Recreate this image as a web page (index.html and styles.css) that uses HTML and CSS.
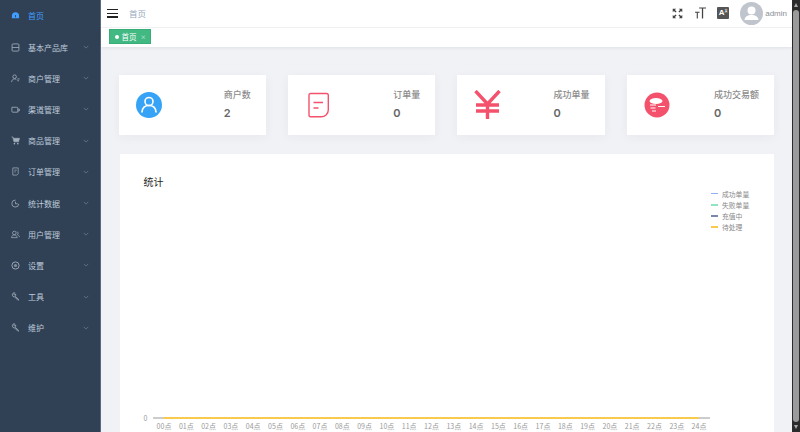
FILE: index.html
```html
<!DOCTYPE html>
<html lang="zh">
<head>
<meta charset="utf-8">
<title>首页</title>
<link rel="stylesheet" href="styles.css">
</head>
<body>
<svg class="defs" width="0" height="0" aria-hidden="true">
  <symbol id="chev" viewBox="0 0 8 5"><path d="M1 1l3 3 3-3" fill="none" stroke="currentColor" stroke-width=".8"/></symbol>
  <symbol id="wrench" viewBox="0 0 10 10"><path d="M1.500 3.500a2.200 2.200 0 0 1 2.600-2.600L3 2.300l.9 1 1.300-1a2.200 2.200 0 0 1-.6 2.400L8.700 8.500 7.800 9.300 4 5.400a2.200 2.200 0 0 1-2.500-1.900z" fill="none" stroke="currentColor" stroke-width=".9"/></symbol>
</svg>
<div class="app">
  <nav class="sidebar">
    <a class="item active"><svg class="ico" viewBox="0 0 10 10"><path d="M1 8V5.500a4 4 0 0 1 8 0V8z" fill="currentColor"/><path d="M5 7V4.500" stroke="#304156" stroke-width="1"/></svg><span class="label">首页</span></a>
    <a class="item"><svg class="ico" viewBox="0 0 10 10"><path d="M2.200 1h5.600a1 1 0 0 1 1 1v6a1 1 0 0 1-1 1H2.200a1 1 0 0 1-1-1V2a1 1 0 0 1 1-1zM1.200 5h7.600" fill="none" stroke="currentColor" stroke-width=".9"/></svg><span class="label">基本产品库</span><svg class="chev"><use href="#chev"/></svg></a>
    <a class="item"><svg class="ico" viewBox="0 0 10 10"><circle cx="4" cy="3" r="2" fill="none" stroke="currentColor" stroke-width=".9"/><path d="M.7 9c.3-2.500 1.500-3.500 3.300-3.500 1 0 1.500.3 2 .7M7 5.500h2.500M7 7.500h2" fill="none" stroke="currentColor" stroke-width=".9"/></svg><span class="label">商户管理</span><svg class="chev"><use href="#chev"/></svg></a>
    <a class="item"><svg class="ico" viewBox="0 0 10 10"><path d="M1 2.500h5.500a1 1 0 0 1 1 1V8H2a1 1 0 0 1-1-1zM7.500 4.500H9.300v2H7.500" fill="none" stroke="currentColor" stroke-width=".9"/></svg><span class="label">渠道管理</span><svg class="chev"><use href="#chev"/></svg></a>
    <a class="item"><svg class="ico" viewBox="0 0 10 10"><path d="M.5 1h1.500l.6 1.500h6.900L8.400 6.500H3.300L2 1.400" fill="currentColor" stroke="currentColor" stroke-width=".6"/><circle cx="3.800" cy="8.500" r=".9" fill="currentColor"/><circle cx="7.600" cy="8.500" r=".9" fill="currentColor"/></svg><span class="label">商品管理</span><svg class="chev"><use href="#chev"/></svg></a>
    <a class="item"><svg class="ico" viewBox="0 0 10 10"><path d="M2 1h6v6.500L6.500 9H2zM3.700 3.500h2.600M3.700 5.500h1.600" fill="none" stroke="currentColor" stroke-width=".8"/></svg><span class="label">订单管理</span><svg class="chev"><use href="#chev"/></svg></a>
    <a class="item"><svg class="ico" viewBox="0 0 10 10"><path d="M8.700 5.500A3.900 3.900 0 1 1 5 1.200M5 3v2.300h2.500" fill="none" stroke="currentColor" stroke-width=".9"/></svg><span class="label">统计数据</span><svg class="chev"><use href="#chev"/></svg></a>
    <a class="item"><svg class="ico" viewBox="0 0 10 10"><circle cx="3.700" cy="3.300" r="2" fill="none" stroke="currentColor" stroke-width=".8"/><path d="M.5 8.500c.3-2 1.500-3 3.200-3s2.900 1 3.200 3zM6.500 1.800a1.800 1.800 0 0 1 .5 3.300c1.300.3 2.200 1.300 2.500 2.800" fill="none" stroke="currentColor" stroke-width=".8"/></svg><span class="label">用户管理</span><svg class="chev"><use href="#chev"/></svg></a>
    <a class="item"><svg class="ico" viewBox="0 0 10 10"><circle cx="5" cy="5" r="4" fill="none" stroke="currentColor" stroke-width="1"/><circle cx="5" cy="5" r="1.800" fill="currentColor" opacity=".7"/></svg><span class="label">设置</span><svg class="chev"><use href="#chev"/></svg></a>
    <a class="item"><svg class="ico"><use href="#wrench"/></svg><span class="label">工具</span><svg class="chev"><use href="#chev"/></svg></a>
    <a class="item"><svg class="ico"><use href="#wrench"/></svg><span class="label">维护</span><svg class="chev"><use href="#chev"/></svg></a>
  </nav>
  <div class="main">
    <header class="topbar">
      <button class="burger"><i></i><i></i><i></i></button>
      <span class="crumb">首页</span>
      <div class="tools">
        <svg class="tool-full" viewBox="0 0 12 12"><path d="M.8 4.500V.8H4.500L3.200 2.100 5 3.900 3.900 5 2.100 3.200zM11.200 4.500V.8H7.500L8.800 2.100 7 3.900 8.100 5 9.900 3.200zM.8 7.500v3.700H4.500L3.200 9.900 5 8.100 3.900 7 2.100 8.800zM11.200 7.500v3.700H7.500L8.800 9.900 7 8.100 8.100 7 9.900 8.800z" fill="#444"/></svg>
        <svg class="tool-size" viewBox="0 0 12 13"><path d="M4.500 .5h7.500v1.200H8.900v10.800H7.500V1.700H4.500zM0 5.200h5v1.100H3.100v6.200H1.900V6.300H0z" fill="#444"/></svg>
        <span class="tool-lang">A<sup>文</sup></span>
        <svg class="avatar" viewBox="0 0 23 23"><circle cx="11.500" cy="11.500" r="11.500" fill="#c0c4cc"/><circle cx="11.500" cy="8.500" r="4" fill="#fff"/><path d="M4.500 18c.3-3.500 3-5 7-5s6.700 1.500 7 5z" fill="#fff"/></svg>
        <span class="user">admin</span>
      </div>
    </header>
    <div class="tagsbar"><span class="tag"><i class="dot"></i>首页<span class="close">×</span></span></div>
    <main class="content">
      <section class="cards">
        <article class="card">
          <svg class="card-ico" viewBox="0 0 26 26"><circle cx="13" cy="13" r="13" fill="#36a3f7"/><circle cx="13" cy="9.500" r="4" fill="none" stroke="#fff" stroke-width="1.600"/><path d="M6 20c.3-4 3-6.500 7-6.500s6.700 2.500 7 6.500" fill="none" stroke="#fff" stroke-width="1.600" stroke-linecap="round"/></svg>
          <div class="stat"><span class="stat-name">商户数</span><span class="stat-val">2</span></div>
        </article>
        <article class="card">
          <svg class="card-ico" viewBox="0 0 26 26"><path d="M5.500 1.500h16a1.800 1.800 0 0 1 1.800 1.800V18c0 4-3.500 6.800-7 6.800H5.500A1.500 1.500 0 0 1 4 23.300V3A1.500 1.500 0 0 1 5.500 1.500z" fill="none" stroke="#f4516c" stroke-width="1.400"/><path d="M8.500 10.500h9.500M8.500 16h5" stroke="#f4516c" stroke-width="1.400"/></svg>
          <div class="stat"><span class="stat-name">订单量</span><span class="stat-val">0</span></div>
        </article>
        <article class="card">
          <svg class="card-ico card-ico-yen" viewBox="0 0 27 30"><path d="M1.500 1L13.500 14 25.500 1M13.500 14v15M2 15h23M2 21h23" fill="none" stroke="#f4516c" stroke-width="3.400"/></svg>
          <div class="stat"><span class="stat-name">成功单量</span><span class="stat-val">0</span></div>
        </article>
        <article class="card">
          <svg class="card-ico" viewBox="0 0 26 26"><circle cx="13" cy="13" r="12.500" fill="#f4516c"/><ellipse cx="12" cy="9" rx="6.500" ry="3" fill="#fff"/><path d="M6 13h6M6.500 16h5M8 19h4M14 14.500h7" stroke="#fff" stroke-width="1.200"/></svg>
          <div class="stat"><span class="stat-name">成功交易额</span><span class="stat-val">0</span></div>
        </article>
      </section>
      <section class="panel">
        <h2 class="panel-title">统计</h2>
        <ul class="legend">
          <li class="legend-item"><i class="swatch s1"></i>成功单量</li>
          <li class="legend-item"><i class="swatch s2"></i>失败单量</li>
          <li class="legend-item"><i class="swatch s3"></i>充值中</li>
          <li class="legend-item"><i class="swatch s4"></i>待处理</li>
        </ul>
        <svg class="chart" viewBox="0 0 654 40" width="654" height="40">
          <text x="25.500" y="12.500" text-anchor="middle">0</text>
          <line x1="33" x2="590" y1="10" y2="10" stroke="#ccc" stroke-width="2"/>
          <line x1="43.500" x2="579" y1="10" y2="10" stroke="#f8cb4d" stroke-width="2"/>
          <g text-anchor="middle">
            <text x="44" y="21">00点</text><text x="66.300" y="21">01点</text><text x="88.600" y="21">02点</text><text x="110.900" y="21">03点</text><text x="133.200" y="21">04点</text><text x="155.500" y="21">05点</text><text x="177.800" y="21">06点</text><text x="200" y="21">07点</text><text x="222.300" y="21">08点</text><text x="244.600" y="21">09点</text><text x="266.900" y="21">10点</text><text x="289.200" y="21">11点</text><text x="311.500" y="21">12点</text><text x="333.800" y="21">13点</text><text x="356.100" y="21">14点</text><text x="378.400" y="21">15点</text><text x="400.700" y="21">16点</text><text x="423" y="21">17点</text><text x="445.300" y="21">18点</text><text x="467.600" y="21">19点</text><text x="489.900" y="21">20点</text><text x="512.200" y="21">21点</text><text x="534.500" y="21">22点</text><text x="556.800" y="21">23点</text><text x="579" y="21">24点</text>
          </g>
        </svg>
      </section>
    </main>
  </div>
  <div class="scrollbar"><span class="arrow-up"></span><span class="thumb"></span><span class="arrow-down"></span></div>
</div>
</body>
</html>
```
FILE: styles.css
```css
* { box-sizing: border-box; margin: 0; padding: 0; }
html, body { width: 800px; height: 432px; overflow: hidden; }
body { font-family: "Noto Sans CJK SC", "Liberation Sans", sans-serif; background: #fff; }
.defs { position: absolute; }
.app { display: flex; width: 800px; height: 432px; }

.sidebar { width: 101px; flex: none; background: #304156; border-right: 1px solid #5b6a80; padding-top: 0.300px; }
.item { display: flex; align-items: center; height: 31.2px; color: #bfcbd9; font-size: 8px; padding: 0 11.500px 0 11px; }
.item.active { color: #409eff; }
.ico { width: 9px; height: 9px; flex: none; margin-right: 8px; color: #a5b0be; }
.item.active .ico { color: #409eff; }
.label { flex: 1; }
.chev { width: 6px; height: 4px; color: #7e8b9c; flex: none; }

.main { flex: 1; min-width: 0; display: flex; flex-direction: column; }
.topbar { height: 27.500px; flex: none; display: flex; align-items: center; padding-left: 6px; border-bottom: 1px solid #f2f3f5; }
.burger { width: 11px; height: 9px; border: 0; background: none; display: flex; flex-direction: column; justify-content: space-between; margin-right: 11px; }
.burger i { display: block; height: 1.500px; background: #222; }
.crumb { font-size: 8.500px; color: #97a8be; }
.tools { margin-left: auto; display: flex; align-items: center; padding-right: 5px; }
.tool-full { width: 11px; height: 11px; margin-right: 12px; }
.tool-size { width: 11px; height: 12px; margin-right: 11px; }
.tool-lang { width: 12px; height: 12px; background: #555; color: #fff; font: bold 8px/12px "Liberation Sans", "Noto Sans CJK SC", sans-serif; margin-right: 11px; text-align: center; border-radius: 1px; white-space: nowrap; overflow: hidden; }
.tool-lang sup { font-size: 3px; vertical-align: 3px; line-height: 0; }
.avatar { width: 23px; height: 23px; margin-right: 2px; }
.user { font: 8px "Liberation Sans", sans-serif; color: #8a8f96; }

.tagsbar { height: 19px; flex: none; display: flex; align-items: center; padding-left: 8px; background: #fff; box-shadow: 0 1px 3px rgba(0,21,41,.08); position: relative; }
.tag { display: flex; align-items: center; height: 15px; width: 42px; margin-top: -0.500px; padding-left: 5px; background: #42b983; border: 1px solid #38ad78; color: #fff; font-size: 7.500px; }
.dot { width: 4px; height: 4px; border-radius: 50%; background: #fff; margin-right: 2.500px; flex: none; }
.close { font-size: 5.500px; margin-left: 4px; opacity: .8; }

.content { flex: 1; min-height: 0; background: #f0f2f6; padding: 28.500px 18px 0 17.500px; overflow: hidden; }
.cards { display: flex; gap: 22px; }
.card { flex: 1; height: 60px; background: #fff; display: flex; align-items: center; justify-content: space-between; padding: 0 15px 0 17px; box-shadow: 0 2px 10px rgba(50,65,86,.05); }
.card-ico { width: 26px; height: 26px; flex: none; }
.card-ico-yen { width: 27px; height: 30px; }
.stat { display: flex; flex-direction: column; align-items: flex-start; padding-top: 1px; }
.stat-name { font-size: 9px; line-height: 14px; font-weight: 500; color: #8c8c8c; }
.stat-val { font: 600 11px/22px "Inter", "Liberation Sans", sans-serif; color: #666; }

.panel { position: relative; margin: 19px 0 0 1px; width: 654px; height: 300px; background: #fff; padding: 21px 24px 0; }
.panel-title { font-size: 10px; line-height: 14px; font-weight: 400; color: #222; }
.legend { position: absolute; top: 34px; left: 591.500px; list-style: none; }
.legend-item { display: flex; align-items: center; height: 11.200px; font-size: 6.800px; color: #888; }
.swatch { width: 7px; height: 1.500px; margin-right: 4px; }
.s1 { background: #8fb2f5; }
.s2 { background: #8ee5c0; }
.s3 { background: #7a86ad; }
.s4 { background: #f8cb4d; }
.chart { position: absolute; left: 0; top: 254px; }
.chart text { font-family: "Noto Sans CJK SC", "Liberation Sans", sans-serif; font-size: 7px; fill: #999; }

.scrollbar { width: 8px; flex: none; background: #2b2b2b; display: flex; flex-direction: column; align-items: center; padding: 3px 0; }
.arrow-up { width: 0; height: 0; border: 2.500px solid transparent; border-top: 0; border-bottom: 4px solid #aaa; }
.arrow-down { width: 0; height: 0; border: 2.500px solid transparent; border-bottom: 0; border-top: 4px solid #aaa; }
.thumb { flex: 1; width: 6px; margin: 3px 0; background: #9b9b9b; border-radius: 3px; }
```
